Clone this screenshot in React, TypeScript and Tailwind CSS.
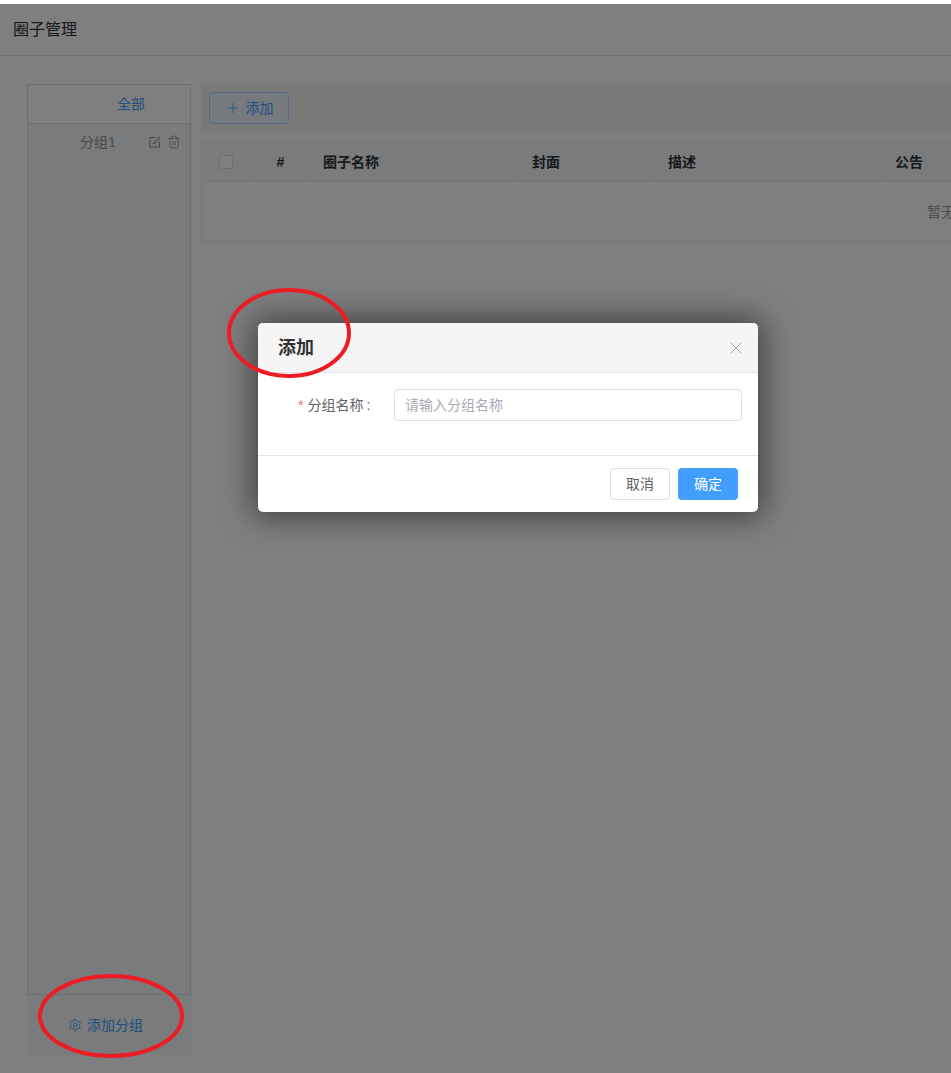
import { Plus, Settings, Trash2, X } from "lucide-react";

const FONT = "font-['Liberation_Sans','Noto_Sans_CJK_SC',sans-serif]";

const COLS = [
  { label: "圈子名称", width: "w-[209px]" },
  { label: "封面", width: "w-[136px]" },
  { label: "描述", width: "w-[227px]" },
  { label: "公告", width: "w-[625px]" },
];

function EditIcon() {
  return (
    <svg viewBox="0 0 12 12" className="w-[12px] h-[12px] mr-[6px]" fill="none" stroke="currentColor" strokeWidth="1">
      <path d="M6.5 1.5H.9v9.6h9.6V5.5" />
      <path d="M4.5 7.6l.4-1.8L10 .8l1.3 1.3-5 5.1z" />
    </svg>
  );
}

function Sidebar() {
  return (
    <div className="w-[164px] shrink-0 flex flex-col">
      <div className="h-[911px] flex flex-col border border-[#dcdfe6] bg-[#f4f6f9]">
        <div className="h-[39px] shrink-0 border-b border-[#dcdfe6] bg-[#fff] pl-[89px] pt-[8px] text-sm leading-[22px] text-[#409eff]">
          全部
        </div>
        <div className="flex items-center h-[36px] pl-[52px] pr-[9px] text-sm text-[#909399]">
          <span className="flex-1">分组1</span>
          <EditIcon />
          <Trash2 className="w-[14px] h-[14px]" strokeWidth={1.4} />
        </div>
      </div>
      <div className="h-[60px] flex items-center justify-center pr-[7px] bg-[#f4f6f9] text-sm text-[#409eff]">
        <Settings className="w-[14px] h-[14px] mr-[5px]" strokeWidth={1.5} />
        添加分组
      </div>
    </div>
  );
}

function Table() {
  return (
    <div className="mt-[9px] w-[1508px] border border-[#ebeef5] text-sm">
      <div className="flex h-[40px] border-b border-[#ebeef5] bg-[#f4f6f9] font-bold text-sm text-[#303133]">
        <div className="w-[49px] flex items-center justify-center border-r border-[#ebeef5]">
          <span className="w-[14px] h-[14px] mr-[1px] rounded-[2px] border border-[#dcdfe6] bg-[#fff]" />
        </div>
        <div className="w-[60px] flex items-center justify-center border-r border-[#ebeef5]">#</div>
        {COLS.map((c) => (
          <div key={c.label} className={`${c.width} flex items-center pl-[12px] border-r border-[#ebeef5]`}>
            {c.label}
          </div>
        ))}
      </div>
      <div className="h-[59px] flex items-center justify-center bg-[#fff] text-sm text-[#909399]">暂无数据</div>
    </div>
  );
}

function Modal() {
  return (
    <div className="absolute left-[258px] top-[319px] w-[500px] h-[189px] flex flex-col rounded-[5px] overflow-hidden bg-[#fff] shadow-[0_0_30px_5px_rgba(0,0,0,0.5)]">
      <div className="h-[50px] shrink-0 flex items-center justify-between pl-[20px] pr-[12px] pt-[1px] bg-[#f5f5f5] border-b border-[#e4e4ea]">
        <span className="text-[18px] font-bold text-[#303133]">添加</span>
        <X className="w-[20px] h-[20px] text-[#909399]" strokeWidth={1} />
      </div>
      <div className="h-[83px] shrink-0 flex items-start pt-[16px] pl-[40px] pr-[16px] border-b border-[#e4e4ea]">
        <label className="w-[96px] h-[32px] flex items-center text-sm text-[#606266]">
          <span className="text-[#f56c6c] mr-[4px]">*</span>分组名称<span className="ml-[3px]">:</span>
        </label>
        <div className="flex-1 h-[32px] flex items-center pl-[10px] rounded-[4px] border border-[#dcdfe6] text-sm text-[#a8abb2]">
          请输入分组名称
        </div>
      </div>
      <div className="flex-1 flex items-start justify-end gap-[8px] pt-[12px] pr-[20px] text-sm">
        <button className="w-[60px] h-[32px] rounded-[4px] border border-[#dcdfe6] text-[#606266]">取消</button>
        <button className="w-[60px] h-[32px] rounded-[4px] bg-[#409eff] text-[#fff]">确定</button>
      </div>
    </div>
  );
}

export default function App() {
  return (
    <div className={`${FONT} w-[951px] h-[1073px] overflow-hidden bg-[#fff] pt-[4px]`}>
      <div className="relative h-[1069px] overflow-hidden">
        <div className="h-[52px] flex items-center pl-[13px] pt-[1px] border-b border-[#e4e4e4] text-base text-[#303133]">
          圈子管理
        </div>
        <div className="flex items-start pt-[28px] pl-[27px]">
          <Sidebar />
          <div className="ml-[10px] flex-1 min-w-0">
            <div className="h-[48px] flex items-center pl-[8px] bg-[#f2f2f2]">
              <button className="w-[80px] h-[32px] flex items-center justify-center gap-[5px] rounded-[4px] border border-[#a0cfff] bg-[#ecf5ff] text-sm text-[#409eff]">
                <Plus className="w-[16px] h-[16px]" strokeWidth={1.2} />
                添加
              </button>
            </div>
            <Table />
          </div>
        </div>
        <div className="absolute inset-0 bg-[#000]/50" />
        <Modal />
      </div>
      <svg className="absolute left-0 top-0 pointer-events-none" width="951" height="1073" fill="none" stroke="#ed1c24" strokeWidth="4">
        <ellipse cx="289" cy="333" rx="60" ry="43" />
        <ellipse cx="111" cy="1016" rx="71" ry="40" />
      </svg>
    </div>
  );
}
